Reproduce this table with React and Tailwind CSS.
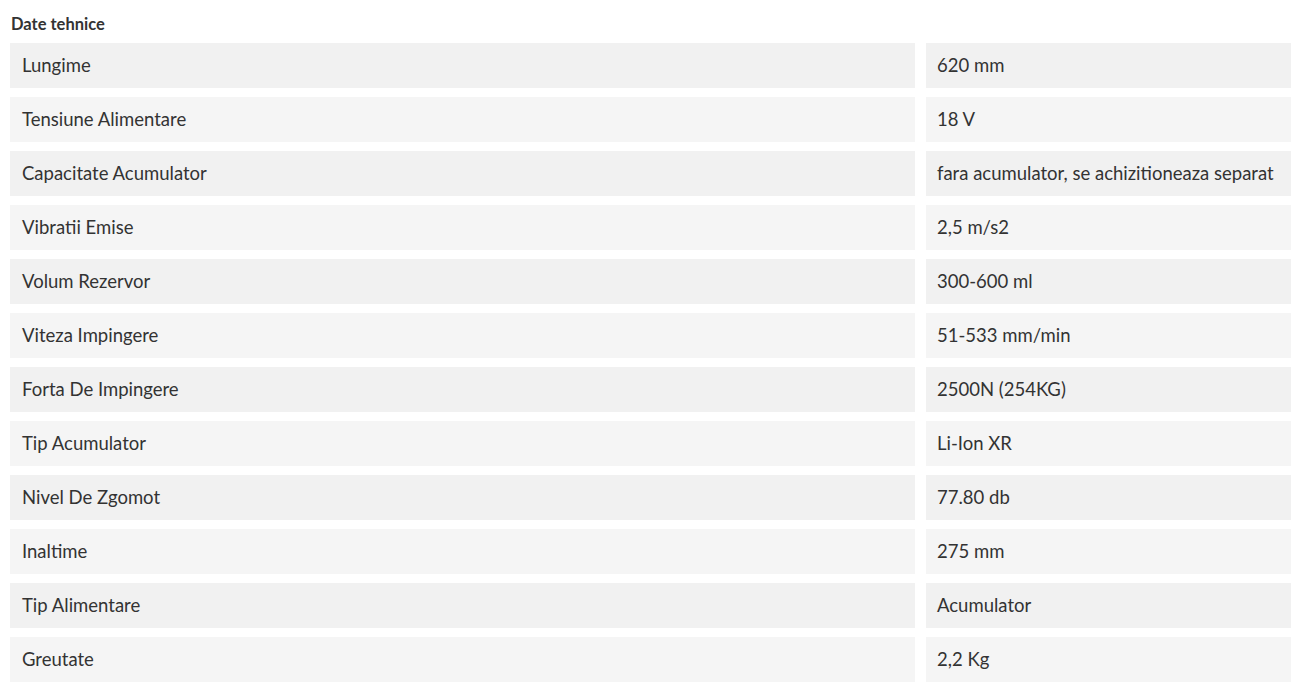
const specs = [
  ["Lungime", "620 mm"],
  ["Tensiune Alimentare", "18 V"],
  ["Capacitate Acumulator", "fara acumulator, se achizitioneaza separat"],
  ["Vibratii Emise", "2,5 m/s2"],
  ["Volum Rezervor", "300-600 ml"],
  ["Viteza Impingere", "51-533 mm/min"],
  ["Forta De Impingere", "2500N (254KG)"],
  ["Tip Acumulator", "Li-Ion XR"],
  ["Nivel De Zgomot", "77.80 db"],
  ["Inaltime", "275 mm"],
  ["Tip Alimentare", "Acumulator"],
  ["Greutate", "2,2 Kg"],
];

export default function App() {
  return (
    <div className="min-h-[693px] bg-white pl-[10px] font-['Lato','Liberation_Sans',sans-serif] text-[#333]">
      <h3 className="pt-[14px] pl-px mb-[9px] text-[16.5px] leading-[20px] font-bold">Date tehnice</h3>
      <div className="flex flex-col gap-[9px]">
        {specs.map(([label, value], i) => {
          const bg = i % 2 === 0 ? "bg-[#f1f1f1]" : "bg-[#f5f5f5]";
          return (
            <div key={label} className="flex gap-[11px] h-[45px] text-[18.5px] leading-[24px]">
              <div className={`flex-1 flex items-center px-3 pb-px ${bg}`}>{label}</div>
              <div className={`w-[365px] flex items-center px-[11px] pb-px ${bg}`}>{value}</div>
            </div>
          );
        })}
      </div>
    </div>
  );
}
